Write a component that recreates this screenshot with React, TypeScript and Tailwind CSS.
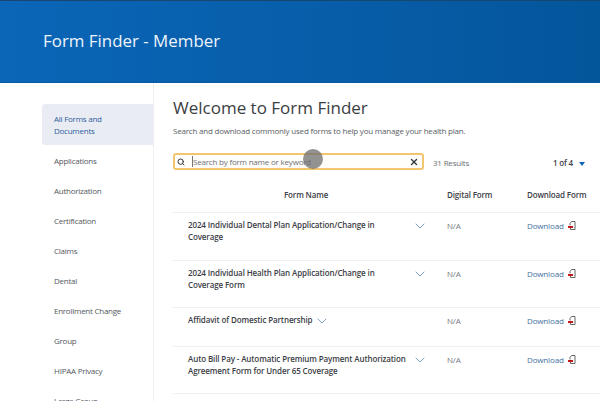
import { Search, X, ChevronDown } from 'lucide-react'

const font = { fontFamily: '"Open Sans", sans-serif' }

const categories = [
  'Applications',
  'Authorization',
  'Certification',
  'Claims',
  'Dental',
  'Enrollment Change',
  'Group',
  'HIPAA Privacy',
  'Large Group',
]

interface FormRow {
  name: string
  rowClass: string
  inline?: boolean
}

const forms: FormRow[] = [
  { name: '2024 Individual Dental Plan Application/Change in Coverage', rowClass: 'h-[48px]' },
  { name: '2024 Individual Health Plan Application/Change in Coverage Form', rowClass: 'h-[47px]' },
  { name: 'Affidavit of Domestic Partnership', rowClass: 'h-[39px]', inline: true },
  { name: 'Auto Bill Pay - Automatic Premium Payment Authorization Agreement Form for Under 65 Coverage', rowClass: 'h-[47px]' },
]

function PdfIcon() {
  return (
    <svg width="8" height="9" viewBox="0 0 8 9" className="mt-[1px] ml-[4px] shrink-0">
      <path d="M3.5 0.5H7V8.5H2.5V6" fill="none" stroke="#666" strokeWidth="1" />
      <path d="M3.5 0.5L2 2.5V4.5" fill="none" stroke="#666" strokeWidth="1" />
      <rect x="0" y="5" width="5" height="2" fill="#c4161c" />
    </svg>
  )
}

function Row({ form }: { form: FormRow }) {
  return (
    <div className={`flex border-t border-[#eef0f3] pt-[6px] ${form.rowClass}`}>
      <div className="flex w-[274px] items-start pl-[15px]">
        <p
          className={`text-[8px] leading-[11.5px] font-semibold tracking-[-0.12px] text-[#3c4046] ${form.inline ? '' : 'w-[221px]'}`}
        >
          {form.name}
        </p>
        <ChevronDown
          size={16}
          strokeWidth={1.1}
          className={`-mt-[1px] shrink-0 text-[#4f80b5] ${form.inline ? 'ml-[2px]' : 'mr-[19px] ml-auto'}`}
        />
      </div>
      <div className="w-[80px] pt-[1px] text-[8px] leading-[11.5px] tracking-[-0.15px] text-[#75797e]">N/A</div>
      <div className="flex items-start pt-[1px] text-[8px] leading-[11.5px] tracking-[-0.15px] text-[#44709f]">
        Download
        <PdfIcon />
      </div>
    </div>
  )
}

export default function App() {
  return (
    <div className="flex h-[401px] w-[600px] flex-col overflow-hidden bg-white" style={font}>
      <header className="flex h-[83px] shrink-0 items-center border-t border-b border-t-[#17466f] border-b-[#0a5a9e] bg-gradient-to-r from-[#0b66b8] to-[#04569b] pl-[43px]">
        <h1 className="-mt-[2px] text-[16.9px] font-normal text-[#eef4fa]">Form Finder - Member</h1>
      </header>

      <div className="flex min-h-0 flex-1">
        <aside className="w-[154px] shrink-0 border-r border-[#edeef2] pt-[21px] pl-[42px]">
          <div className="flex h-[41px] flex-col justify-center rounded-l-[3px] bg-[#e9edf3] pl-[12px] text-[8px] leading-[11.5px] tracking-[-0.25px] text-[#2f5c9e]">
            <span>All Forms and</span>
            <span>Documents</span>
          </div>
          <ul className="mt-[1px]">
            {categories.map((c) => (
              <li key={c} className="flex h-[30px] items-center pl-[12px] text-[8px] tracking-[-0.25px] text-[#54585e]">
                {c}
              </li>
            ))}
          </ul>
        </aside>

        <main className="min-w-0 flex-1 pl-[19px]">
          <h2 className="mt-[13px] text-[17px] leading-[24px] font-normal text-[#3b3e42]">Welcome to Form Finder</h2>
          <p className="mt-[5px] text-[8px] leading-[12px] tracking-[-0.2px] text-[#5a5e64]">
            Search and download commonly used forms to help you manage your health plan.
          </p>

          <div className="mt-[16px] flex items-center">
            <div className="relative flex h-[17px] w-[251px] items-center rounded-[3px] border-2 border-[#f2c56e] bg-[#fffefb] pl-[2px]">
              <Search size={8} strokeWidth={3} className="text-[#33373c]" />
              <span className="ml-[7px] border-l border-[#777] text-[8px] leading-[11px] tracking-[-0.2px] text-[#6d7177]">
                Search by form name or keyword
              </span>
              <X size={10} strokeWidth={3} className="absolute right-[3px] text-[#2e3237]" />
              <span className="absolute top-[-6px] left-[128px] h-[20px] w-[20px] rounded-full bg-[#6e6e6e]/75 blur-[0.5px]" />
            </div>
            <span className="mt-[2px] ml-[9px] text-[8px] tracking-[-0.2px] text-[#6b6f75]">31 Results</span>
            <span className="mt-[2px] ml-[84px] text-[8px] font-semibold tracking-[-0.2px] text-[#3c4046]">1 of 4</span>
            <span className="mt-[4px] ml-[6px] h-0 w-0 border-x-[3.5px] border-t-[4px] border-x-transparent border-t-[#0b66b8]" />
          </div>

          <div className="mt-[19px] flex h-[23px] text-[8px] leading-[12px] font-semibold tracking-[-0.15px] text-[#3c4046]">
            <div className="w-[274px] pl-[111px]">Form Name</div>
            <div className="w-[80px]">Digital Form</div>
            <div>Download Form</div>
          </div>

          <div>
            {forms.map((f) => (
              <Row key={f.name} form={f} />
            ))}
            <div className="border-t border-[#eef0f3]" />
          </div>
        </main>
      </div>
    </div>
  )
}
